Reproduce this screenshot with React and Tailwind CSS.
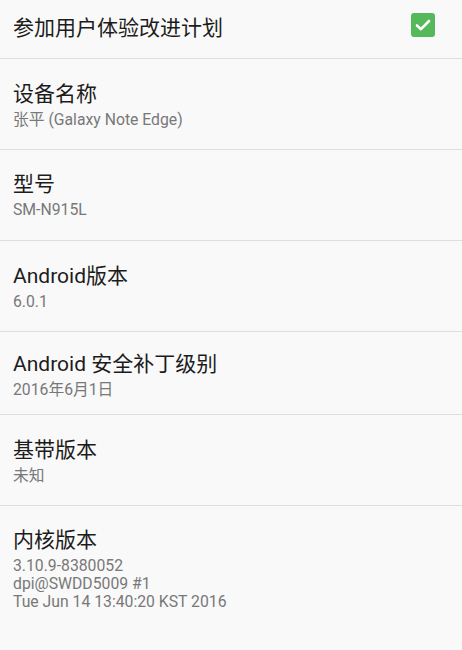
import React from "react";

const rows = [
  { title: "设备名称", lines: ["张平 (Galaxy Note Edge)"], h: "h-[91px]", pt: "pt-[22px]" },
  { title: "型号", lines: ["SM-N915L"], h: "h-[91px]", pt: "pt-[21px]" },
  { title: "Android版本", lines: ["6.0.1"], h: "h-[91px]", pt: "pt-[22px]" },
  { title: "Android 安全补丁级别", lines: ["2016年6月1日"], h: "h-[83px]", pt: "pt-[19px]" },
  { title: "基带版本", lines: ["未知"], h: "h-[91px]", pt: "pt-[22px]" },
];

const kernel = ["3.10.9-8380052", "dpi@SWDD5009 #1", "Tue Jun 14 13:40:20 KST 2016"];

const Row = ({ title, lines, h, pt, last }) => (
  <div className={`${h} ${pt} px-[13px] ${last ? "" : "border-b border-[#dedede]"}`}>
    <div className="text-[21px] leading-[26px] text-[#1c1c1c]">{title}</div>
    <div className="mt-[4px]">
      {lines.map((l, i) => (
        <div key={i} className="text-[15.75px] leading-[18px] text-[#787878]">
          {l}
        </div>
      ))}
    </div>
  </div>
);

export default function App() {
  return (
    <div
      className="w-[462px] h-[650px] overflow-hidden bg-[#f9f9f9]"
      style={{ fontFamily: 'Roboto, "Noto Sans CJK SC", sans-serif' }}
    >
      <div className="h-[59px] flex items-center justify-between pl-[13px] pr-[27px] border-b border-[#dedede]">
        <div className="text-[21px] leading-[26px] text-[#1c1c1c] -mt-[2px]">参加用户体验改进计划</div>
        <div className="w-[24px] h-[24px] rounded-[3px] bg-[#55b95b] flex items-center justify-center -mt-[8px]">
          <svg width="18" height="18" viewBox="0 0 18 18">
            <path d="M3 9.5 L7 13.2 L15 5" fill="none" stroke="#ffffff" strokeWidth="2.6" strokeLinecap="round" strokeLinejoin="round" />
          </svg>
        </div>
      </div>
      {rows.map((r, i) => (
        <Row key={i} {...r} />
      ))}
      <Row title="内核版本" lines={kernel} h="h-[145px]" pt="pt-[21px]" last />
    </div>
  );
}
